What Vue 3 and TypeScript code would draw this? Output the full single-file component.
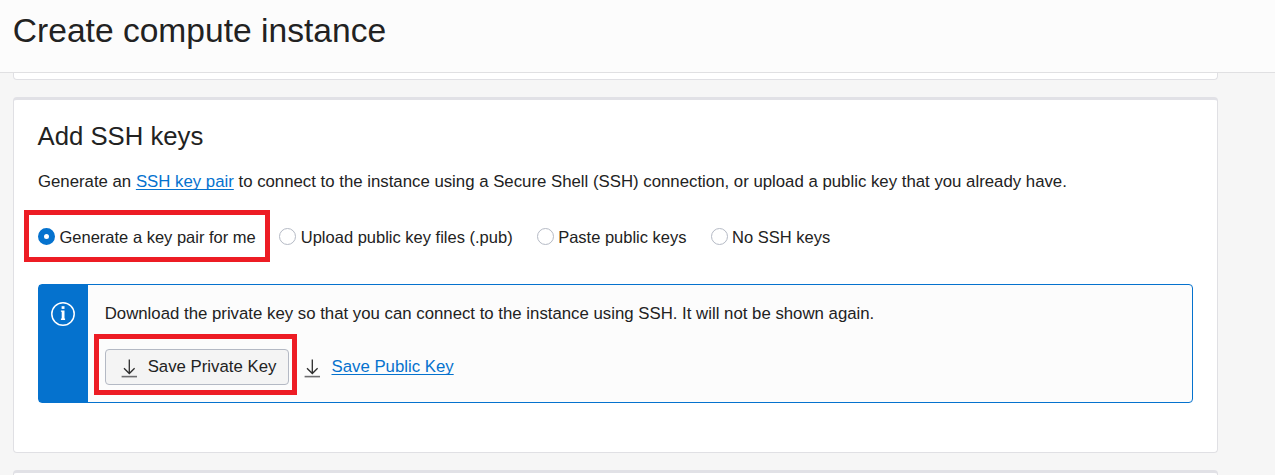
<script setup lang="ts">
import { ref } from 'vue'

interface KeyOption {
  id: string
  label: string
}

const options: KeyOption[] = [
  { id: 'generate', label: 'Generate a key pair for me' },
  { id: 'upload', label: 'Upload public key files (.pub)' },
  { id: 'paste', label: 'Paste public keys' },
  { id: 'none', label: 'No SSH keys' },
]
const selected = ref('generate')
</script>

<template>
  <div class="page">
    <header class="header">
      <h1>Create compute instance</h1>
    </header>
    <main class="content">
      <section class="card card-previous"></section>
      <section class="card card-keys">
        <h2>Add SSH keys</h2>
        <p class="intro">
          Generate an <a class="link" href="#">SSH key pair</a> to connect to the instance using a Secure Shell (SSH)
          connection, or upload a public key that you already have.
        </p>
        <div class="options" role="radiogroup">
          <label v-for="option in options" :key="option.id" class="option">
            <input v-model="selected" type="radio" name="ssh-keys" :value="option.id" />
            <span>{{ option.label }}</span>
            <i v-if="option.id === 'generate'" class="highlight"></i>
          </label>
        </div>
        <div class="notice">
          <div class="notice-side">
            <svg width="26" height="26" viewBox="0 0 26 26" fill="none">
              <circle cx="13" cy="13" r="11.2" stroke="#fff" stroke-width="1.5" />
              <path d="M11.6 5.2h2.9v2.7h-2.9z" fill="#fff" />
              <path d="M10.9 9.4h3.6v8.2h.6v1.3h-4.2v-1.3h.8v-6.9h-.8z" fill="#fff" />
            </svg>
          </div>
          <div class="notice-body">
            <p>Download the private key so that you can connect to the instance using SSH. It will not be shown again.</p>
            <div class="actions">
              <button class="save-private" type="button">
                <svg class="download" width="16" height="19" viewBox="0 0 16 19" fill="none">
                  <path d="M8.3 0.5v14M3 9.2L8.3 14.5l5.3-5.3" stroke="#2d2d2d" stroke-width="1.3" />
                  <path d="M0.6 17.6H16" stroke="#6e6e70" stroke-width="1.6" />
                </svg>
                <span>Save Private Key</span>
                <i class="highlight"></i>
              </button>
              <svg class="download" width="16" height="19" viewBox="0 0 16 19" fill="none">
                <path d="M8.3 0.5v14M3 9.2L8.3 14.5l5.3-5.3" stroke="#2d2d2d" stroke-width="1.3" />
                <path d="M0.6 17.6H16" stroke="#6e6e70" stroke-width="1.6" />
              </svg>
              <a class="link save-public" href="#">Save Public Key</a>
            </div>
          </div>
        </div>
      </section>
      <section class="card card-next"></section>
    </main>
  </div>
</template>

<style>
body {
  margin: 0;
  overflow: hidden;
}
</style>

<style scoped>
.page {
  box-sizing: border-box;
  height: 475px;
  overflow: hidden;
  display: flex;
  flex-direction: column;
  background: #f6f6f6;
  color: #222;
  font: 16.8px/24px "Liberation Sans", Arial, sans-serif;
}
.page * {
  box-sizing: border-box;
}
.header {
  flex: none;
  height: 73px;
  padding: 11px 12.8px 0;
  background: #fcfcfc;
  border-bottom: 1px solid #e0e0e2;
}
h1 {
  margin: 0;
  font-size: 33.6px;
  line-height: 40px;
  font-weight: 400;
}
.content {
  flex: 1;
  min-height: 0;
  overflow: hidden;
  padding-left: 13px;
}
.card {
  width: 1205px;
  background: #fff;
  border: 1px solid #e0e0e4;
  border-top: 3px solid #e1e1e6;
  border-radius: 4px;
}
.card-previous {
  height: 7px;
  border-top: 0;
  border-radius: 0 0 4px 4px;
}
.card-keys {
  height: 356px;
  margin: 17px 0;
  padding: 20px 24px 0;
}
.card-next {
  height: 60px;
}
h2 {
  margin: 0 0 0 -0.4px;
  font-size: 25.7px;
  line-height: 32px;
  font-weight: 400;
}
p {
  margin: 0;
  white-space: nowrap;
}
.intro {
  margin: 18px 0 0 -0.1px;
}
.link {
  color: #0572ce;
  text-decoration: underline;
  text-decoration-thickness: 1px;
  text-underline-offset: 2px;
  text-decoration-skip-ink: none;
}
.options {
  display: flex;
  margin-top: 31px;
  font-size: 16.5px;
}
.option {
  position: relative;
  display: flex;
  align-items: center;
  gap: 4.5px;
  margin-right: 24px;
  white-space: nowrap;
}
.option:first-child {
  margin-right: 23.5px;
}
input {
  appearance: none;
  flex: none;
  width: 17px;
  height: 17px;
  margin: 0 0 1px;
  border: 1px solid #b5bac5;
  border-radius: 50%;
  background: #fff;
}
input:checked {
  border: 6px solid #0572ce;
}
.highlight {
  position: absolute;
  border: 5px solid #ed1c24;
  pointer-events: none;
}
.option .highlight {
  inset: -15px -14px -13px -14px;
}
.notice {
  display: flex;
  height: 119px;
  margin-top: 35px;
  border: 1px solid #0572ce;
  border-radius: 4px;
  background: #fcfcfc;
}
.notice-side {
  flex: none;
  width: 49px;
  padding: 16px 0 0 11px;
  background: #0572ce;
}
.notice-side svg {
  display: block;
}
.notice-body {
  padding: 17px 0 0 16.7px;
}
.actions {
  display: flex;
  align-items: center;
  height: 36px;
  margin: 23px 0 0 0.3px;
}
.save-private {
  position: relative;
  display: flex;
  align-items: center;
  width: 184px;
  height: 36px;
  margin-right: 15px;
  padding: 0 0 0 15px;
  border: 1px solid #b4b9c4;
  border-radius: 4px;
  background: #f4f4f4;
  color: inherit;
  font: inherit;
  white-space: nowrap;
}
.save-private span {
  margin-left: 10.7px;
}
.save-private .highlight {
  inset: -16px -9px -11px -12px;
}
.download {
  flex: none;
  margin-top: 2px;
}
.save-public {
  margin-left: 11.5px;
}
</style>
